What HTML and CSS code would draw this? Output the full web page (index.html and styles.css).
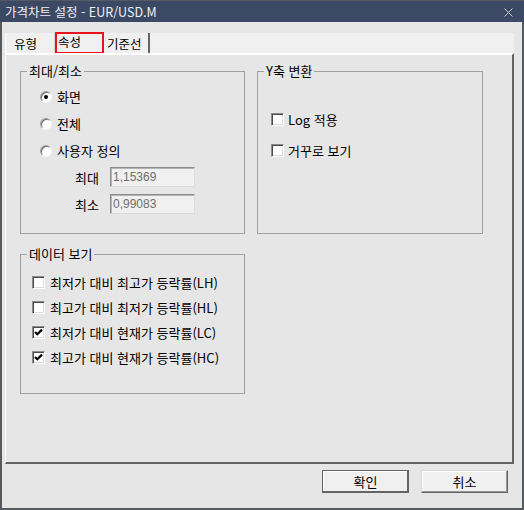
FILE: index.html
```html
<!DOCTYPE html>
<html lang="ko">
<head>
  <meta charset="UTF-8">
  <title>가격차트 설정</title>
  <link rel="stylesheet" href="styles.css">
</head>
<body>
  <div class="window">
    <div class="titlebar">
      <span class="title">가격차트 설정 - EUR/USD.M</span>
      <svg class="close" width="9" height="9" viewBox="0 0 9 9">
        <path d="M0.5 0.5L8.5 8.5M8.5 0.5L0.5 8.5" stroke="#c4c9d2" stroke-width="1" fill="none"/>
      </svg>
    </div>

    <div class="content">
      <div class="tabs">
        <div class="tab tab-first">유형</div>
        <div class="tab tab-active">속성</div>
        <div class="tab tab-last">기준선</div>
      </div>

      <div class="page">
        <div class="groups">
          <fieldset class="group">
            <legend>최대/최소</legend>
            <div class="group-body range-body">
              <label class="option"><span class="radio checked"></span>화면</label>
              <label class="option"><span class="radio"></span>전체</label>
              <label class="option"><span class="radio"></span>사용자 정의</label>
              <div class="fields">
                <div class="field">
                  <span class="field-label">최대</span>
                  <input class="field-input" type="text" value="1,15369" disabled>
                </div>
                <div class="field">
                  <span class="field-label">최소</span>
                  <input class="field-input" type="text" value="0,99083" disabled>
                </div>
              </div>
            </div>
          </fieldset>

          <fieldset class="group">
            <legend>Y축 변환</legend>
            <div class="group-body axis-body">
              <label class="option"><span class="check"></span>Log 적용</label>
              <label class="option"><span class="check"></span>거꾸로 보기</label>
            </div>
          </fieldset>

          <fieldset class="group">
            <legend>데이터 보기</legend>
            <div class="group-body data-body">
              <label class="option"><span class="check"></span>최저가 대비 최고가 등락률(LH)</label>
              <label class="option"><span class="check"></span>최고가 대비 최저가 등락률(HL)</label>
              <label class="option">
                <span class="check"><svg width="9" height="9" viewBox="0 0 9 9"><polyline points="1,4 3.3,6.3 8,1.6" stroke="#000" stroke-width="2.2" fill="none"/></svg></span>최저가 대비 현재가 등락률(LC)
              </label>
              <label class="option">
                <span class="check"><svg width="9" height="9" viewBox="0 0 9 9"><polyline points="1,4 3.3,6.3 8,1.6" stroke="#000" stroke-width="2.2" fill="none"/></svg></span>최고가 대비 현재가 등락률(HC)
              </label>
            </div>
          </fieldset>
        </div>
      </div>

      <div class="actions">
        <button class="btn btn-default" type="button">확인</button>
        <button class="btn" type="button">취소</button>
      </div>
    </div>
  </div>
</body>
</html>
```

FILE: styles.css
```css
:root {
  --window-color: #e6e6e6;
  --strip-color: #f0f0f0;
  --title-color: #3c4964;
  --frame-color: #555a60;
  --shadow-color: #646464;
  --line-color: #a0a0a0;
  --text-color: #000;
  --body-font: "Noto Sans CJK KR", "Liberation Sans", sans-serif;
}

* {
  margin: 0;
  padding: 0;
  box-sizing: border-box;
}

body {
  width: 524px;
  height: 510px;
  font-family: var(--body-font);
  font-size: 13px;
  line-height: 15px;
  color: var(--text-color);
  background: var(--window-color);
}

.window {
  display: flex;
  flex-direction: column;
  width: 524px;
  height: 510px;
  border: 2px solid var(--frame-color);
  border-top-width: 1px;
  background: var(--window-color);
}

.titlebar {
  display: flex;
  align-items: center;
  justify-content: space-between;
  height: 21px;
  margin: 0 -2px;
  padding: 0 11px 0 5px;
  background: var(--title-color);
}

.title {
  color: #eef0f4;
  font-size: 12.5px;
  white-space: nowrap;
}

.close {
  display: block;
  margin-top: 1px;
}

.content {
  display: flex;
  flex-direction: column;
  flex: 1;
  padding: 11px 8px 0 3px;
}

/* tab strip */
.tabs {
  display: flex;
  height: 20px;
  background: var(--strip-color);
  font-size: 12.5px;
}

.tab {
  display: flex;
  align-items: center;
  height: 20px;
  white-space: nowrap;
}

.tab-first {
  width: 50px;
  padding-left: 8px;
  border-left: 1px solid #fff;
  border-right: 1px solid #d2d2d2;
}

.tab-active {
  width: 49px;
  height: 22px;
  margin-top: -1px;
  padding: 0 0 3px 1px;
  border: 2px solid #e8141c;
}

.tab-last {
  width: 46px;
  padding-left: 3px;
  border-right: 2px solid var(--shadow-color);
}

/* tab page */
.page {
  height: 411px;
  border: 2px solid var(--shadow-color);
  border-top-color: #fff;
  border-left-color: #fff;
  border-left-width: 1px;
  padding: 9px 0 0 14px;
}

.groups {
  display: grid;
  grid-template-columns: 225px 226px;
  grid-template-rows: 170px 147px;
  column-gap: 12px;
  row-gap: 13px;
}

.group {
  margin: 0;
  padding: 0;
  min-width: 0;
  border: 1px solid var(--line-color);
}

.group legend {
  margin-left: 6px;
  padding: 0 2px;
  font-size: 13px;
  line-height: 14px;
}

.group-body {
  display: flex;
  flex-direction: column;
}

.range-body {
  padding: 5px 0 0 19px;
}

.axis-body {
  padding: 26px 0 0 13px;
}

.axis-body .option {
  height: 31px;
  gap: 4px;
}

.data-body {
  padding: 9px 0 0 11px;
}

.data-body .option {
  height: 25px;
}

.option {
  display: flex;
  align-items: center;
  gap: 5px;
  height: 27px;
  white-space: nowrap;
}

/* radio and checkbox */
.radio {
  position: relative;
  flex: none;
  width: 12px;
  height: 12px;
  border-radius: 50%;
  background: #fff;
  border: 1px solid;
  border-color: #9a9a9a #f4f4f4 #f4f4f4 #9a9a9a;
  box-shadow: inset 1px 1px 0 #6e6e6e;
}

.radio.checked::after {
  content: "";
  position: absolute;
  left: 3px;
  top: 3px;
  width: 4px;
  height: 4px;
  border-radius: 50%;
  background: #000;
}

.check {
  display: flex;
  align-items: center;
  justify-content: center;
  flex: none;
  width: 13px;
  height: 13px;
  background: #fff;
  border: 1px solid;
  border-color: #8c8c8c #fff #fff #8c8c8c;
  box-shadow: inset 1px 1px 0 #4a4a4a, inset -1px -1px 0 #dcdcdc;
}

.check svg {
  display: block;
}

/* fixed range fields */
.fields {
  display: flex;
  flex-direction: column;
  gap: 7px;
  margin-top: 3px;
  padding-left: 35px;
}

.field {
  display: flex;
  align-items: center;
  height: 20px;
}

.field-label {
  width: 35px;
}

.field-input {
  width: 85px;
  height: 20px;
  padding: 0 2px;
  font-family: "Liberation Sans", sans-serif;
  font-size: 12px;
  color: #6f6f6f;
  background: #f0f0f0;
  border: 1px solid;
  border-color: #8c8c8c #dcdcdc #dcdcdc #8c8c8c;
  box-shadow: inset 1px 1px 0 #b4b4b4;
  outline: none;
}

/* buttons */
.actions {
  display: flex;
  justify-content: flex-end;
  gap: 12px;
  margin-top: 6px;
  padding-right: 6px;
}

.btn {
  width: 87px;
  height: 23px;
  font-family: var(--body-font);
  font-size: 13px;
  line-height: 15px;
  color: #000;
  background: #f0f0f0;
  border: 1px solid;
  border-color: #d8d8d8 var(--shadow-color) var(--shadow-color) #d8d8d8;
  box-shadow: inset -1px -1px 0 #9a9a9a, inset 1px 1px 0 #fff;
  cursor: pointer;
}

.btn-default {
  border-color: var(--shadow-color);
  box-shadow: inset -1px -1px 0 var(--shadow-color), inset 1px 1px 0 #fff;
}
```
